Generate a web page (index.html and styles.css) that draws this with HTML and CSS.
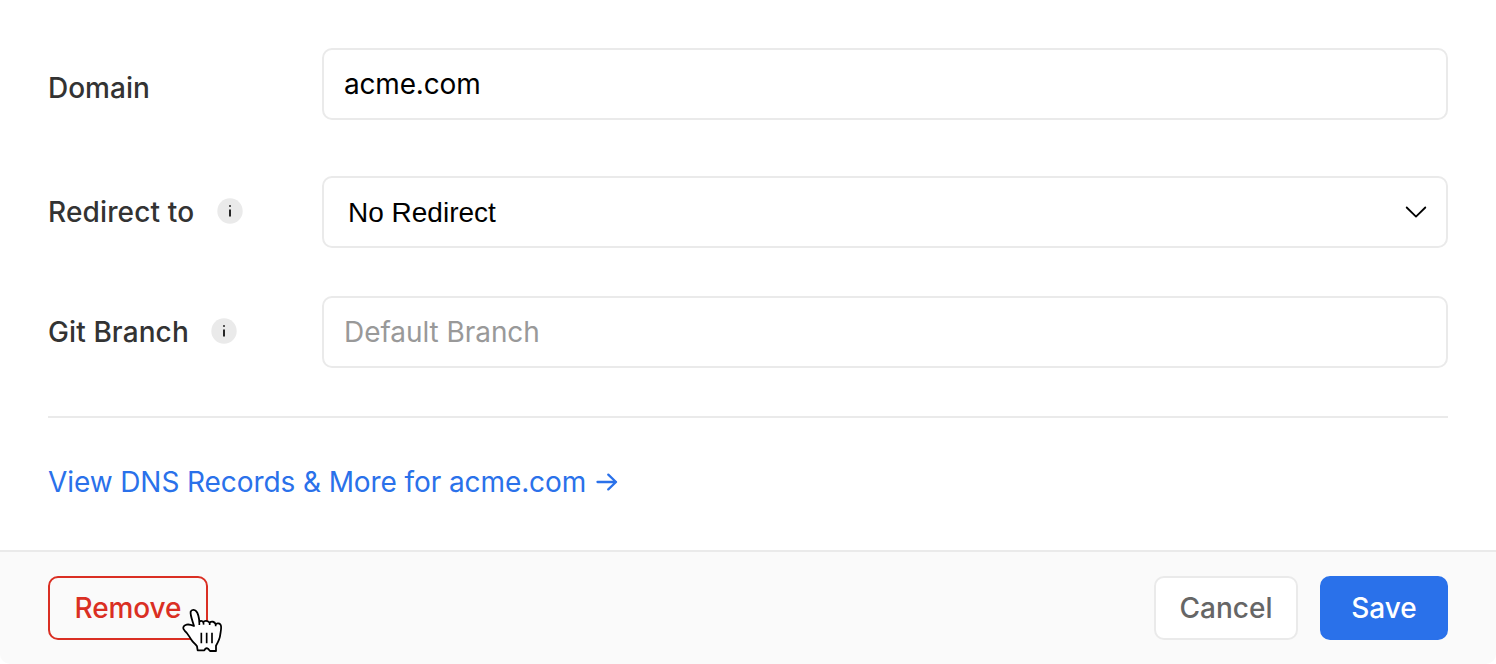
FILE: index.html
```html
<!DOCTYPE html>
<html lang="en">
<head>
<meta charset="utf-8">
<title>Edit Domain</title>
<link rel="stylesheet" href="styles.css">
</head>
<body>
<main class="card">
  <div class="body">
    <div class="row row-domain">
      <div class="label label-domain"><span class="t-domain">Domain</span></div>
      <div class="field"><span class="t-value">acme.com</span></div>
    </div>
    <div class="row row-redirect">
      <div class="label"><span class="t-redirect">Redirect to</span>
        <svg class="info" viewBox="0 0 26 26"><circle cx="13" cy="13" r="12.7" fill="#eaeaea"/><path d="M12.1 7.2h1.8v1.6h-1.8zM12.1 11.4h1.8V18.6h-1.8z" fill="#111"/></svg>
      </div>
      <div class="field select"><span class="t-select">No Redirect</span>
        <svg class="chevron" viewBox="0 0 22 14"><path d="M1.7 2.5 11 11.6 20.3 2.5" fill="none" stroke="#000" stroke-width="1.8" stroke-linecap="round" stroke-linejoin="round"/></svg>
      </div>
    </div>
    <div class="row">
      <div class="label"><span class="t-branch">Git Branch</span>
        <svg class="info" viewBox="0 0 26 26"><circle cx="13" cy="13" r="12.7" fill="#eaeaea"/><path d="M12.1 7.2h1.8v1.6h-1.8zM12.1 11.4h1.8V18.6h-1.8z" fill="#111"/></svg>
      </div>
      <div class="field"><span class="t-placeholder">Default Branch</span></div>
    </div>
    <div class="links">
      <a class="link"><span class="t-link">View DNS Records &amp; More for acme.com</span>
        <svg class="arrow" viewBox="0 0 22 18"><path d="M1.5 9H20M12.3 1.6 20 9l-7.7 7.4" fill="none" stroke="#2a71ea" stroke-width="2.3" stroke-linecap="round" stroke-linejoin="round"/></svg>
      </a>
    </div>
  </div>
  <footer class="footer">
    <div class="button remove"><span class="t-remove">Remove</span>
      <svg class="cursor" viewBox="30 54 132 135"><path d="M62 65C60 75 68 94 72 108C65 105 58 102 50 104C38 107 37 115 44 122C52 128 57 139 64 149C70 158 77 163 81 169L83 181H103Q108 172 114 176L120 183H138V167C144 157 150 145 151 132C153 120 156 108 151 103C147 98 139 100 137 103C134 94 124 93 119 98C114 91 103 91 100 96C96 91 91 92 88 95C87 83 84 70 79 64C74 58 65 58 62 65Z" fill="#fff" stroke="#000" stroke-width="5.4" stroke-linejoin="round"/><path d="M94 128v32M110 128v32M126 128v32" fill="none" stroke="#000" stroke-width="5"/><path d="M88 95v10M100 96l1 8M119 98v7M137 103v6" fill="none" stroke="#000" stroke-width="5"/></svg>
    </div>
    <div class="button cancel"><span>Cancel</span></div>
    <div class="button save"><span>Save</span></div>
  </footer>
</main>
</body>
</html>
```
FILE: styles.css
```css
* { box-sizing: border-box; }
body { margin: 0; background: #fff; font-family: Inter, sans-serif; font-size: 28px; line-height: 34px; }
.card { height: 664px; display: flex; flex-direction: column; background: #fff; border-radius: 0 0 10px 10px; overflow: hidden; }
.body { flex: 1; padding: 48px 48px 0; }
.row { display: flex; height: 72px; }
.row-domain { margin-bottom: 56px; }
.row-redirect { margin-bottom: 48px; }
.label { width: 274px; display: flex; align-items: center; color: #333; font-weight: 500; white-space: nowrap; }
.label-domain { padding-top: 8px; }
.t-redirect { letter-spacing: 0.15px; }
.t-branch { letter-spacing: 0.1px; }
.t-value { letter-spacing: -0.18px; }
.t-link { letter-spacing: -0.09px; }
.t-remove { letter-spacing: -0.1px; }
.info { width: 26px; height: 26px; margin: -2px 0 0 22.5px; }
.field { flex: 1; display: flex; align-items: center; border: 2px solid #eaeaea; border-radius: 10px; padding: 0 20px; background: #fff; color: #000; }
.select { justify-content: space-between; padding-left: 24px; font-family: "Liberation Sans", Arial, sans-serif; }
.t-select { padding-top: 2px; }
.chevron { width: 22px; height: 14px; margin-right: -1px; }
.t-placeholder { color: #999; letter-spacing: -0.06px; }
.links { margin-top: 48px; border-top: 2px solid #eaeaea; padding-top: 47px; }
.link { display: flex; align-items: center; color: #2a71ea; white-space: nowrap; }
.arrow { width: 22px; height: 18px; margin-left: 10px; }
.footer { height: 114px; display: flex; padding: 24px 48px; border-top: 2px solid #eaeaea; background: #fafafa; }
.button { height: 64px; display: flex; align-items: center; justify-content: center; border: 2px solid #eaeaea; border-radius: 10px; background: #fff; font-weight: 500; }
.remove { position: relative; width: 160px; color: #da2f23; border-color: #da2f23; background: transparent; }
.cancel { width: 144px; margin-left: auto; color: #666; }
.save { width: 128px; margin-left: 22px; color: #fff; background: #2a71ea; border-color: #2a71ea; }
.cursor { position: absolute; left: 130px; top: 30px; width: 44px; height: 45px; }
```
